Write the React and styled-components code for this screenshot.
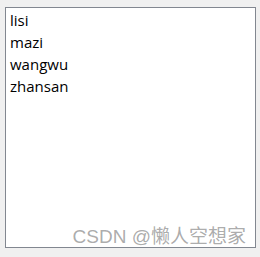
import React from "react";
import styled, { createGlobalStyle } from "styled-components";

const GlobalStyle = createGlobalStyle`
  html, body {
    margin: 0;
    padding: 0;
    background: #f0f0f0;
  }
  body {
    width: 260px;
    height: 257px;
    overflow: hidden;
  }
`;

const Window = styled.div`
  position: relative;
  width: 260px;
  height: 257px;
  padding: 7px 4px 9px 5px;
  box-sizing: border-box;
`;

const ListBox = styled.ul`
  margin: 0;
  padding: 1px 4px;
  list-style: none;
  height: 100%;
  box-sizing: border-box;
  background: #ffffff;
  border: 1px solid #828790;
`;

const Item = styled.li`
  font-family: "Segoe UI", "Open Sans", "Noto Sans", sans-serif;
  font-size: 15px;
  line-height: 22px;
  color: #000;
`;

const Watermark = styled.div`
  position: absolute;
  right: 14px;
  bottom: 9px;
  font-family: "Liberation Sans", "Noto Sans CJK SC", sans-serif;
  font-size: 19px;
  color: rgba(125, 125, 125, 0.65);
  white-space: nowrap;
`;

const names = ["lisi", "mazi", "wangwu", "zhansan"];

export default function App() {
  return (
    <>
      <GlobalStyle />
      <Window>
        <ListBox>
          {names.map((n) => (
            <Item key={n}>{n}</Item>
          ))}
        </ListBox>
        <Watermark>CSDN @懒人空想家</Watermark>
      </Window>
    </>
  );
}
